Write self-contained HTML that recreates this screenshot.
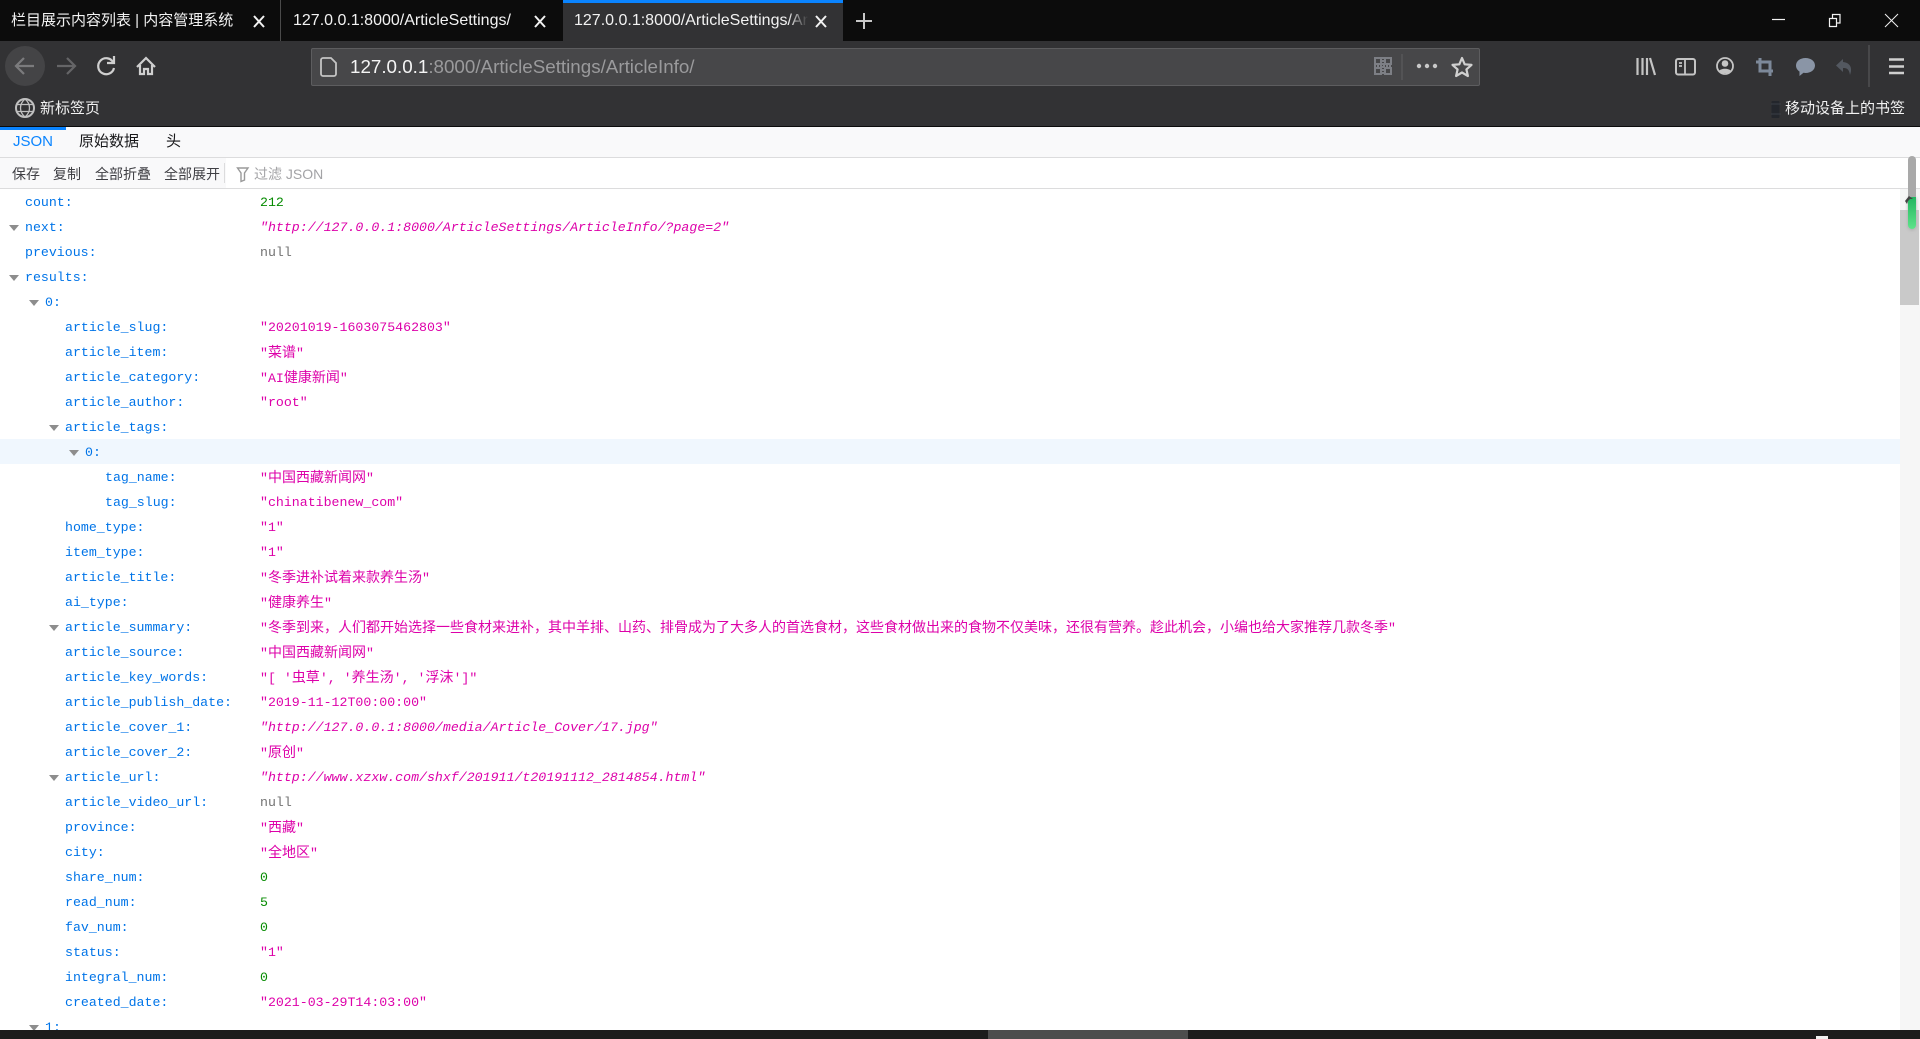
<!DOCTYPE html>
<html lang="zh"><head><meta charset="utf-8"><title>127.0.0.1:8000/ArticleSettings/ArticleInfo/</title>
<style>
html,body{margin:0;padding:0;width:1920px;height:1039px;overflow:hidden;background:#fff}
body{position:relative;font-family:"Liberation Sans","Noto Sans CJK SC",sans-serif}
.a{position:absolute;white-space:nowrap}
svg{position:absolute;overflow:visible}
.t{color:#f2f2f2;font-size:15px;line-height:20px;top:11px}
.t2{font-size:16px}
.c{position:absolute;left:0;top:189px;width:1900px;height:841px;overflow:hidden;font:13.25px/25px "Liberation Mono","WenQuanYi Zen Hei",monospace}
.r{position:absolute;left:0;width:1900px;height:25px;white-space:pre}
.r b{font-weight:normal;color:#0074e8;position:absolute;top:1px}
.r u{text-decoration:none;position:absolute;left:260px;top:1px}
.s{color:#dd00a9}.s i{font-style:italic}.n{color:#058b00}.l{color:#737373}
em{font-style:normal;font-size:14px;font-family:"WenQuanYi Zen Hei","Noto Sans CJK SC",sans-serif}
.tw{position:absolute;top:11px;width:0;height:0;border-left:5px solid transparent;border-right:5px solid transparent;border-top:6px solid #8d8d8d}
.tb{font-size:14px;color:#3f3f44;top:165px;line-height:18px}
</style></head><body>
<!-- tab bar -->
<div class="a" style="left:0;top:0;width:1920px;height:41px;background:#0c0c0c"></div>
<div class="a" style="left:280px;top:0;width:1px;height:41px;background:#4a4a4a"></div>
<div class="a" style="left:563px;top:0;width:280px;height:41px;background:#323234"></div>
<div class="a" style="left:563px;top:0;width:280px;height:3px;background:#0a84ff"></div>
<div class="a t" style="left:11px">栏目展示内容列表 | 内容管理系统</div>
<div class="a t t2" style="left:293px">127.0.0.1:8000/ArticleSettings/</div>
<div class="a t t2" style="left:574px;width:234px;overflow:hidden">127.0.0.1:8000/ArticleSettings/ArticleInfo/</div>
<div class="a" style="left:788px;top:8px;width:20px;height:28px;background:linear-gradient(90deg,rgba(50,50,52,0),#323234)"></div>
<svg style="left:0;top:0" width="1920" height="41" fill="none" stroke="#f2f2f2">
<path d="M254 16l10 11M264 16l-10 11M535 16l10 11M545 16l-10 11M816 16l10 11M826 16l-10 11" stroke-width="2"/>
<path d="M864 13v16M856 21h16" stroke="#c8c8c8" stroke-width="2"/>
<path d="M1772 19.5h13" stroke-width="1.2"/>
<path d="M1829.5 18.5h7v8h-7zM1832.5 18v-3.500h7.500v8.500h-3" stroke-width="1.200"/>
<path d="M1885 14l13 13M1898 14l-13 13" stroke-width="1"/>
</svg>
<!-- toolbars -->
<div class="a" style="left:0;top:41px;width:1920px;height:85px;background:#323234"></div>
<div class="a" style="left:0;top:126px;width:1920px;height:1px;background:#0c0c0c"></div>
<div class="a" style="left:311px;top:48px;width:1167px;height:36px;background:#474749;border:1px solid #5d5d5f;border-radius:2px"></div>
<svg style="left:0;top:0" width="1920" height="126" fill="none">
<circle cx="25" cy="66" r="20" fill="#444446"/>
<path d="M34 66H16M24 58l-8 8 8 8" stroke="#7b7b7d" stroke-width="2.200"/>
<path d="M57 66h18M67 58l8 8-8 8" stroke="#656567" stroke-width="2.200"/>
<path d="M113 62a8 8 0 1 0 1 6" stroke="#cfcfcf" stroke-width="2.200"/>
<path d="M114 56v7h-7" stroke="#cfcfcf" stroke-width="2.200"/>
<path d="M137 67l9-9 9 9M140 65v9h4v-5h4v5h4v-9" stroke="#cfcfcf" stroke-width="2.200"/>
<path d="M322 58h8l5 5v11a2 2 0 0 1-2 2h-11a2 2 0 0 1-2-2V60a2 2 0 0 1 2-2z" stroke="#c4c4c4" stroke-width="1.800" transform="translate(1 0)"/>
<circle cx="25" cy="108" r="9" stroke="#c0c0c0" stroke-width="2"/>
<path d="M16 104.500h18M16 111.500h18M25 99c-6 5-6 13 0 18M25 99c6 5 6 13 0 18" stroke="#c0c0c0" stroke-width="1.300"/>
<!-- qr -->
<path d="M1375 58h6v6h-6zM1385 58h6v6h-6zM1375 68h6v6h-6zM1385 68h6v6h-6z" stroke="#7d7f85" stroke-width="2"/>
<path d="M1374 66h18M1383 57v18M1385 74h7" stroke="#7d7f85" stroke-width="2" stroke-dasharray="2 1"/>
<path d="M1402 54v26" stroke="#5f5f61"/>
<circle cx="1419" cy="66" r="2.200" fill="#c8c8c8"/><circle cx="1427" cy="66" r="2.200" fill="#c8c8c8"/><circle cx="1435" cy="66" r="2.200" fill="#c8c8c8"/>
<path d="M1462 58l2.700 6.300 6.800.6-5.100 4.500 1.500 6.600-5.900-3.500-5.900 3.500 1.500-6.600-5.100-4.500 6.800-.6z" stroke="#d0d0d0" stroke-width="2.200" stroke-linejoin="round"/>
<!-- right icons -->
<path d="M1637.500 58v17M1642.500 58v17M1647 58v17M1650 58l5 17" stroke="#c4c4c4" stroke-width="2.200"/>
<rect x="1676" y="59" width="19" height="15.500" rx="2" stroke="#c4c4c4" stroke-width="2"/>
<path d="M1685 59v16M1679 63h3M1679 66h3" stroke="#c4c4c4" stroke-width="1.800"/>
<circle cx="1725" cy="66" r="8" stroke="#c4c4c4" stroke-width="1.800"/>
<circle cx="1725" cy="63.500" r="3.300" fill="#c4c4c4"/>
<path d="M1719 71c2-3 10-3 12 0l-3 2h-6z" fill="#c4c4c4"/>
<path d="M1760 58v13h13M1756 62h14v14" stroke="#7d899a" stroke-width="3"/>
<path d="M1805.500 58c5.500 0 9.500 3.300 9.500 7.500s-4 7.500-9.500 7.500c-.7 0-1.400 0-2-.2l-4 3.200v-4.500c-2.200-1.400-3.500-3.600-3.500-6 0-4.200 4-7.500 9.500-7.500z" fill="#8a95a6"/>
<path d="M1843 59l-7 6.500 7 6.500v-4c4 0 6 1 7 7 2-5 2-12-7-13z" fill="#535860"/>
<path d="M1869 45v42" stroke="#5f5f61"/>
<path d="M1889 59.500h15M1889 66.500h15M1889 73h15" stroke="#cfcfcf" stroke-width="2.600"/>
<rect x="1771.500" y="101" width="8" height="17" rx="1" fill="#23262c" />
<path d="M1771 104h10M1771 114h10" stroke="#3a3e46"/>
</svg>
<div class="a" style="left:350px;top:55px;font-size:18.8px;line-height:24px;color:#9a9a9c;white-space:pre"><span style="color:#f5f5f5">127.0.0.1</span>:8000/ArticleSettings/ArticleInfo/</div>
<div class="a" style="left:40px;top:99px;font-size:15px;line-height:20px;color:#f2f2f2">新标签页</div>
<div class="a" style="left:1785px;top:99px;font-size:15px;line-height:20px;color:#f2f2f2">移动设备上的书签</div>
<!-- json viewer tabs -->
<div class="a" style="left:0;top:127px;width:1920px;height:30px;background:#f9f9fa"></div>
<div class="a" style="left:0;top:127px;width:66px;height:3px;background:#0a84ff"></div>
<div class="a" style="left:0;top:157px;width:1920px;height:1px;background:#dcdcdd"></div>
<div class="a" style="left:13px;top:132px;font-size:15px;line-height:20px;color:#0a84ff">JSON</div>
<div class="a" style="left:79px;top:132px;font-size:15px;line-height:20px;color:#18181a">原始数据</div>
<div class="a" style="left:166px;top:132px;font-size:15px;line-height:20px;color:#18181a">头</div>
<div class="a" style="left:0;top:158px;width:1920px;height:30px;background:#fff"></div>
<div class="a" style="left:0;top:158px;width:226px;height:30px;background:#f9f9fa"></div>
<div class="a" style="left:224px;top:163px;width:1px;height:20px;background:#dcdcdd"></div>
<div class="a" style="left:0;top:188px;width:1920px;height:1px;background:#dcdcdd"></div>
<div class="a tb" style="left:12px">保存</div>
<div class="a tb" style="left:53px">复制</div>
<div class="a tb" style="left:95px">全部折叠</div>
<div class="a tb" style="left:164px">全部展开</div>
<svg style="left:0;top:0" width="300" height="190" fill="none"><path d="M237.500 168h10.500l-3.500 5v7l-3.500 1.500v-8.500z" stroke="#9a9a9a" stroke-width="1.400"/></svg>
<div class="a" style="left:254px;top:165px;font-size:14px;line-height:18px;color:#a3a3a6">过滤 JSON</div>
<!-- content -->
<div class="c">
<div class="r" style="top:0"><b style="left:25px">count:</b><u class="n">212</u></div>
<div class="r" style="top:25px"><span class="tw" style="left:9px"></span><b style="left:25px">next:</b><u class="s"><i>"http://127.0.0.1:8000/ArticleSettings/ArticleInfo/?page=2"</i></u></div>
<div class="r" style="top:50px"><b style="left:25px">previous:</b><u class="l">null</u></div>
<div class="r" style="top:75px"><span class="tw" style="left:9px"></span><b style="left:25px">results:</b></div>
<div class="r" style="top:100px"><span class="tw" style="left:29px"></span><b style="left:45px">0:</b></div>
<div class="r" style="top:125px"><b style="left:65px">article_slug:</b><u class="s">"20201019-1603075462803"</u></div>
<div class="r" style="top:150px"><b style="left:65px">article_item:</b><u class="s">"<em>菜谱</em>"</u></div>
<div class="r" style="top:175px"><b style="left:65px">article_category:</b><u class="s">"AI<em>健康新闻</em>"</u></div>
<div class="r" style="top:200px"><b style="left:65px">article_author:</b><u class="s">"root"</u></div>
<div class="r" style="top:225px"><span class="tw" style="left:49px"></span><b style="left:65px">article_tags:</b></div>
<div class="r" style="top:250px;background:#f0f7fe"><span class="tw" style="left:69px"></span><b style="left:85px">0:</b></div>
<div class="r" style="top:275px"><b style="left:105px">tag_name:</b><u class="s">"<em>中国西藏新闻网</em>"</u></div>
<div class="r" style="top:300px"><b style="left:105px">tag_slug:</b><u class="s">"chinatibenew_com"</u></div>
<div class="r" style="top:325px"><b style="left:65px">home_type:</b><u class="s">"1"</u></div>
<div class="r" style="top:350px"><b style="left:65px">item_type:</b><u class="s">"1"</u></div>
<div class="r" style="top:375px"><b style="left:65px">article_title:</b><u class="s">"<em>冬季进补试着来款养生汤</em>"</u></div>
<div class="r" style="top:400px"><b style="left:65px">ai_type:</b><u class="s">"<em>健康养生</em>"</u></div>
<div class="r" style="top:425px"><span class="tw" style="left:49px"></span><b style="left:65px">article_summary:</b><u class="s">"<em>冬季到来，人们都开始选择一些食材来进补，其中羊排、山药、排骨成为了大多人的首选食材，这些食材做出来的食物不仅美味，还很有营养。趁此机会，小编也给大家推荐几款冬季</em>"</u></div>
<div class="r" style="top:450px"><b style="left:65px">article_source:</b><u class="s">"<em>中国西藏新闻网</em>"</u></div>
<div class="r" style="top:475px"><b style="left:65px">article_key_words:</b><u class="s">"[ '<em>虫草</em>', '<em>养生汤</em>', '<em>浮沫</em>']"</u></div>
<div class="r" style="top:500px"><b style="left:65px">article_publish_date:</b><u class="s">"2019-11-12T00:00:00"</u></div>
<div class="r" style="top:525px"><b style="left:65px">article_cover_1:</b><u class="s"><i>"http://127.0.0.1:8000/media/Article_Cover/17.jpg"</i></u></div>
<div class="r" style="top:550px"><b style="left:65px">article_cover_2:</b><u class="s">"<em>原创</em>"</u></div>
<div class="r" style="top:575px"><span class="tw" style="left:49px"></span><b style="left:65px">article_url:</b><u class="s"><i>"http://www.xzxw.com/shxf/201911/t20191112_2814854.html"</i></u></div>
<div class="r" style="top:600px"><b style="left:65px">article_video_url:</b><u class="l">null</u></div>
<div class="r" style="top:625px"><b style="left:65px">province:</b><u class="s">"<em>西藏</em>"</u></div>
<div class="r" style="top:650px"><b style="left:65px">city:</b><u class="s">"<em>全地区</em>"</u></div>
<div class="r" style="top:675px"><b style="left:65px">share_num:</b><u class="n">0</u></div>
<div class="r" style="top:700px"><b style="left:65px">read_num:</b><u class="n">5</u></div>
<div class="r" style="top:725px"><b style="left:65px">fav_num:</b><u class="n">0</u></div>
<div class="r" style="top:750px"><b style="left:65px">status:</b><u class="s">"1"</u></div>
<div class="r" style="top:775px"><b style="left:65px">integral_num:</b><u class="n">0</u></div>
<div class="r" style="top:800px"><b style="left:65px">created_date:</b><u class="s">"2021-03-29T14:03:00"</u></div>
<div class="r" style="top:825px"><span class="tw" style="left:29px"></span><b style="left:45px">1:</b></div>
</div>
<!-- vertical scrollbar -->
<div class="a" style="left:1900px;top:189px;width:20px;height:841px;background:#f6f6f6"></div>
<div class="a" style="left:1900px;top:210px;width:19px;height:95px;background:#c9c9c9"></div>
<div class="a" style="left:1908px;top:156px;width:8px;height:60px;background:#a9a9a9;border-radius:4px"></div>
<div class="a" style="left:1908px;top:197px;width:8px;height:32px;background:linear-gradient(#22b560,#5fe38a);border-radius:0 0 4px 4px;box-shadow:0 1px 3px #aaa"></div>
<svg style="left:1904px;top:194px" width="12" height="12"><path d="M1 7l4-5 4 3-3 0-2 2-1 3z" fill="#444"/></svg>
<!-- bottom scrollbar -->
<div class="a" style="left:0;top:1030px;width:1920px;height:9px;background:#1c1c1c"></div>
<div class="a" style="left:988px;top:1030px;width:200px;height:9px;background:#4d4d4d"></div>
<div class="a" style="left:1816px;top:1036px;width:12px;height:3px;background:#f0f0f0"></div>
</body></html>
